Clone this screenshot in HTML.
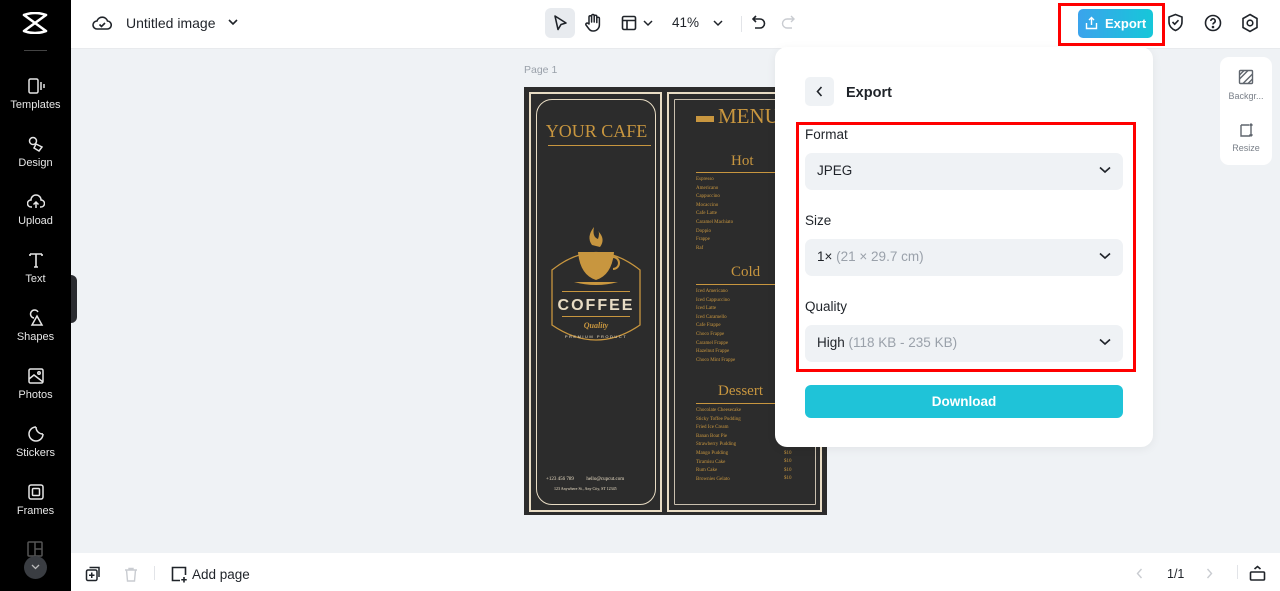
<!DOCTYPE html>
<html><head><meta charset="utf-8">
<style>
*{box-sizing:border-box;margin:0;padding:0}
body{width:1280px;height:591px;overflow:hidden;font-family:"Liberation Sans",sans-serif;background:#eff2f5;position:relative;color:#1f2329}
.abs{position:absolute}
#side{left:0;top:0;width:71px;height:591px;background:#000}
.si{position:absolute;left:0;width:71px;text-align:center;color:#e6e6e6;font-size:11px}
.si svg{display:block;margin:0 auto 3px}
#top{left:71px;top:0;width:1209px;height:48px;background:#fff}
#bot{left:71px;top:553px;width:1209px;height:38px;background:#fff}
.menu{font-family:"Liberation Serif",serif;color:#c8963f}
.item{font-size:5px;line-height:8.6px;color:#c8963f;font-family:"Liberation Serif",serif}
#panel{left:775px;top:47px;width:378px;height:400px;background:#fff;border-radius:12px;box-shadow:0 2px 10px rgba(0,0,0,.06)}
.lbl{position:absolute;left:30px;font-size:13.5px;color:#1f2329}
.sel{position:absolute;left:30px;width:318px;height:37px;background:#eff2f5;border-radius:7px;font-size:13.5px;padding:10px 12px;color:#1f2329}
.sel .g{color:#9aa1aa}
.sel svg{position:absolute;right:12px;top:13px}
</style></head><body>

<div id="side" class="abs">
  <svg class="abs" style="left:22px;top:12px" width="26" height="22" viewBox="0 0 26 22"><path d="M2 3 Q13 -1 24 3 L2 19 Q13 23 24 19 Z" fill="none" stroke="#fff" stroke-width="2.6" stroke-linejoin="round"/></svg>
  <div class="abs" style="left:24px;top:50px;width:23px;height:1px;background:#444"></div>
  <div class="si" style="top:76px"><svg width="18" height="20" viewBox="0 0 18 18" fill="none" stroke="#e6e6e6" stroke-width="1.5"><rect x="2" y="2" width="9" height="14" rx="1.5"/><path d="M14 5v8M17 7v4"/></svg>Templates</div>
  <div class="si" style="top:134px"><svg width="18" height="20" viewBox="0 0 18 18" fill="none" stroke="#e6e6e6" stroke-width="1.5"><circle cx="6" cy="6" r="3.5"/><path d="M9 9l6 3-3 4-5-3z"/></svg>Design</div>
  <div class="si" style="top:192px"><svg width="18" height="20" viewBox="0 0 18 18" fill="none" stroke="#e6e6e6" stroke-width="1.5"><path d="M5 14H4a3.5 3.5 0 0 1 0-7 5 5 0 0 1 10 0 3.5 3.5 0 0 1 0 7h-1M9 15V9M6.5 11.5L9 9l2.5 2.5"/></svg>Upload</div>
  <div class="si" style="top:250px"><svg width="18" height="20" viewBox="0 0 18 18" fill="none" stroke="#e6e6e6" stroke-width="1.6"><path d="M3 3h12M9 3v13M3 3v2M15 3v2M7 16h4"/></svg>Text</div>
  <div class="si" style="top:308px"><svg width="18" height="20" viewBox="0 0 18 18" fill="none" stroke="#e6e6e6" stroke-width="1.5"><path d="M7 9a4 4 0 1 1 4-6M10 7l5 9H5z"/></svg>Shapes</div>
  <div class="si" style="top:366px"><svg width="18" height="20" viewBox="0 0 18 18" fill="none" stroke="#e6e6e6" stroke-width="1.5"><rect x="2" y="2" width="14" height="14" rx="1.5"/><path d="M2 12l5-4 9 7"/><circle cx="12" cy="6" r="1.2"/></svg>Photos</div>
  <div class="si" style="top:424px"><svg width="18" height="20" viewBox="0 0 18 18" fill="none" stroke="#e6e6e6" stroke-width="1.5"><path d="M16 9A7 7 0 1 1 9 2"/><path d="M9 2c0 4 3 7 7 7"/></svg>Stickers</div>
  <div class="si" style="top:482px"><svg width="18" height="20" viewBox="0 0 18 18" fill="none" stroke="#e6e6e6" stroke-width="1.5"><rect x="2" y="2" width="14" height="14" rx="2"/><rect x="5.5" y="5.5" width="7" height="7" rx="1"/></svg>Frames</div>
  <svg class="abs" style="left:27px;top:541px" width="16" height="16" viewBox="0 0 16 16" fill="none" stroke="#555" stroke-width="1.5"><rect x="1" y="1" width="14" height="14" rx="1"/><path d="M8 1v14M8 8h7"/></svg>
  <div class="abs" style="left:24px;top:556px;width:23px;height:23px;border-radius:50%;background:#3a3d42"></div>
  <svg class="abs" style="left:31px;top:564px" width="9" height="6" viewBox="0 0 9 6"><path d="M1 1l3.5 3.5L8 1" fill="none" stroke="#bbb" stroke-width="1.3"/></svg>
</div>
<div class="abs" style="left:71px;top:275px;width:6px;height:48px;background:#2a2c30;border-radius:0 6px 6px 0"></div>

<div id="top" class="abs">
  <svg class="abs" style="left:21px;top:14px" width="20" height="18" viewBox="0 0 20 18" fill="none" stroke="#1f2329" stroke-width="1.6"><path d="M6 15H5a4 4 0 0 1 0-8 5.5 5.5 0 0 1 10.5 0A4 4 0 0 1 15 15z"/><path d="M7.5 10.5l2 2 3.5-3.5"/></svg>
  <div class="abs" style="left:55px;top:15px;font-size:14px;color:#1f2329">Untitled image</div>
  <svg class="abs" style="left:157px;top:19px" width="10" height="7" viewBox="0 0 10 7"><path d="M1 1l4 4 4-4" fill="none" stroke="#1f2329" stroke-width="1.6"/></svg>
  <div class="abs" style="left:474px;top:8px;width:30px;height:30px;background:#e8ebef;border-radius:6px"></div>
  <svg class="abs" style="left:481px;top:14px" width="16" height="18" viewBox="0 0 16 18"><path d="M3 2l11 7-5 1.5-3 5z" fill="none" stroke="#1f2329" stroke-width="1.6" stroke-linejoin="round"/></svg>
  <svg class="abs" style="left:513px;top:13px" width="18" height="20" viewBox="0 0 18 20" fill="none" stroke="#1f2329" stroke-width="1.5" stroke-linejoin="round"><path d="M5 11V4a1.3 1.3 0 0 1 2.6 0v5V2.8a1.3 1.3 0 0 1 2.6 0V9V3.5a1.3 1.3 0 0 1 2.6 0V9.5V5.5a1.3 1.3 0 0 1 2.6 0V12a6 6 0 0 1-6 6H9a5 5 0 0 1-4-2L2 12a1.3 1.3 0 0 1 2-1.6z"/></svg>
  <svg class="abs" style="left:550px;top:15px" width="16" height="16" viewBox="0 0 16 16" fill="none" stroke="#1f2329" stroke-width="1.6"><rect x="1.5" y="1.5" width="13" height="13" rx="1.5"/><path d="M1.5 5.5h13M6 5.5v9"/></svg>
  <svg class="abs" style="left:572px;top:20px" width="10" height="7" viewBox="0 0 10 7"><path d="M1 1l4 4 4-4" fill="none" stroke="#1f2329" stroke-width="1.5"/></svg>
  <div class="abs" style="left:601px;top:15px;font-size:13.5px">41%</div>
  <svg class="abs" style="left:642px;top:20px" width="10" height="7" viewBox="0 0 10 7"><path d="M1 1l4 4 4-4" fill="none" stroke="#1f2329" stroke-width="1.5"/></svg>
  <div class="abs" style="left:670px;top:16px;width:1px;height:16px;background:#e2e4e8"></div>
  <svg class="abs" style="left:681px;top:15px" width="14" height="15" viewBox="0 0 14 15" fill="none" stroke="#1f2329" stroke-width="1.6"><path d="M4 1L1 4l3 3M1 4h7a4.5 4.5 0 0 1 0 9H3"/></svg>
  <svg class="abs" style="left:710px;top:15px" width="14" height="15" viewBox="0 0 14 15" fill="none" stroke="#c9ccd1" stroke-width="1.4"><path d="M10 1l3 3-3 3M13 4H6a4.5 4.5 0 0 0 0 9h5"/></svg>
  <div class="abs" style="left:987px;top:3px;width:107px;height:43px;border:3px solid #ff0000"></div>
  <div class="abs" style="left:1007px;top:9px;width:75px;height:29px;border-radius:5px;background:linear-gradient(90deg,#3ba3ec,#16c7d9);color:#fff;font-weight:bold;font-size:13px;padding:7px 0 0 27px;white-space:nowrap;overflow:hidden">Export</div>
  <svg class="abs" style="left:1014px;top:16px" width="13" height="14" viewBox="0 0 13 14" fill="none" stroke="#fff" stroke-width="1.4"><path d="M6.5 9V1.5M4 4l2.5-2.5L9 4M1.5 7v5.5h10V7"/></svg>
  <svg class="abs" style="left:1096px;top:13px" width="17" height="19" viewBox="0 0 17 19" fill="none" stroke="#1f2329" stroke-width="1.6"><path d="M8.5 1.5l6.5 2.5v5c0 4-3 7-6.5 8.5C5 16 2 13 2 9V4z"/><path d="M5.5 9l2.2 2.2 3.8-4"/></svg>
  <svg class="abs" style="left:1133px;top:14px" width="18" height="18" viewBox="0 0 18 18" fill="none" stroke="#1f2329" stroke-width="1.6"><circle cx="9" cy="9" r="7.5"/><path d="M6.8 7a2.2 2.2 0 1 1 3 2c-.6.3-.8.8-.8 1.5"/><circle cx="9" cy="13" r=".5" fill="#1f2329"/></svg>
  <svg class="abs" style="left:1170px;top:13px" width="18" height="20" viewBox="0 0 18 20" fill="none" stroke="#1f2329" stroke-width="1.6"><path d="M9 1.5l7 4v9l-7 4-7-4v-9z"/><circle cx="9" cy="10" r="2.8"/></svg>
</div>
<div class="abs" style="left:71px;top:48px;width:1209px;height:1px;background:#e8eaed"></div>

<div class="abs" style="left:524px;top:64px;font-size:10.5px;color:#9aa1aa">Page 1</div>

<div class="abs" style="left:524px;top:87px;width:303px;height:428px;background:#2c2c2c">
  <div class="abs" style="left:5px;top:5px;width:133px;height:420px;border:2px solid #e8dcc4"></div>
  <div class="abs" style="left:12px;top:12px;width:120px;height:406px;border:1.5px solid #e8dcc4;border-radius:16px"></div>
  <div class="abs menu" style="left:13px;top:34px;width:119px;text-align:center;font-size:18px">YOUR CAFE</div>
  <div class="abs" style="left:24px;top:58px;width:103px;height:1px;background:#c8963f"></div>
  <svg class="abs" style="left:26px;top:138px" width="92" height="130" viewBox="0 0 92 130">
    <path d="M2 45 Q46 10 90 45 V100 Q46 130 2 100 Z" fill="none" stroke="#c8963f" stroke-width="1.3"/>
    <path d="M42 20 Q36 12 44 2 Q42 12 48 14 Q50 8 48 6 Q56 14 50 22 Z" fill="#c8963f"/>
    <path d="M28 27 H64 Q62 50 46 55 Q30 50 28 27 Z" fill="#c8963f"/>
    <path d="M63 32 a6 6 0 0 1 0 12" fill="none" stroke="#c8963f" stroke-width="2"/>
    <path d="M24 57 H68 Q46 63 24 57 Z" fill="#c8963f"/>
    <rect x="12" y="66" width="68" height="1" fill="#c8963f"/>
    <text x="46" y="85" text-anchor="middle" font-family="Liberation Sans" font-weight="bold" font-size="16" letter-spacing="2" fill="#e8dcc4">COFFEE</text>
    <rect x="12" y="91" width="68" height="1" fill="#c8963f"/>
    <text x="46" y="103" text-anchor="middle" font-family="Liberation Serif" font-style="italic" font-weight="bold" font-size="8" fill="#c8963f">Quality</text>
    <text x="46" y="113" text-anchor="middle" font-family="Liberation Sans" font-size="4" letter-spacing="1.5" fill="#e8dcc4">PREMIUM PRODUCT</text>
  </svg>
  <div class="abs item" style="left:22px;top:389px;color:#e8dcc4">+123 456 789 &nbsp;&nbsp;&nbsp;&nbsp;&nbsp;&nbsp;&nbsp;&nbsp; hello@cupcut.com</div>
  <div class="abs item" style="left:30px;top:398px;font-size:4px;color:#e8dcc4">123 Anywhere St., Any City, ST 12345</div>

  <div class="abs" style="left:143px;top:5px;width:155px;height:420px;border:2px solid #e8dcc4"></div>
  <div class="abs" style="left:150px;top:12px;width:142px;height:406px;border:1px solid #c9bfae;border-radius:1px"></div>
  <div class="abs" style="left:172px;top:29px;width:18px;height:6px;background:#c8963f"></div>
  <div class="abs menu" style="left:194px;top:17px;font-size:21px">MENU</div>
  <div class="abs menu" style="left:207px;top:66px;font-size:15px">Hot</div>
  <div class="abs" style="left:172px;top:85px;width:110px;height:1px;background:#c8963f"></div>
  <div class="abs item" style="left:172px;top:89px">Espresso<br>Americano<br>Cappuccino<br>Mocaccino<br>Cafe Latte<br>Caramel Machiato<br>Doppio<br>Frappe<br>Raf</div>
  <div class="abs menu" style="left:207px;top:177px;font-size:15px">Cold</div>
  <div class="abs" style="left:172px;top:197px;width:110px;height:1px;background:#c8963f"></div>
  <div class="abs item" style="left:172px;top:201px">Iced Americano<br>Iced Cappuccino<br>Iced Latte<br>Iced Caramello<br>Cafe Frappe<br>Choco Frappe<br>Caramel Frappe<br>Hazelnut Frappe<br>Choco Mint Frappe</div>
  <div class="abs menu" style="left:194px;top:296px;font-size:15px">Dessert</div>
  <div class="abs" style="left:172px;top:316px;width:110px;height:1px;background:#c8963f"></div>
  <div class="abs item" style="left:172px;top:320px">Chocolate Cheesecake<br>Sticky Toffee Pudding<br>Fried Ice Cream<br>Banan Boat Pie<br>Strawberry Pudding<br>Mango Pudding<br>Tiramisu Cake<br>Rum Cake<br>Brownies Gelato</div>
  <div class="abs item" style="left:260px;top:354px">$10<br>$10<br>$10<br>$10<br>$10</div>
</div>

<div id="panel" class="abs">
  <div class="abs" style="left:30px;top:30px;width:29px;height:29px;background:#eff2f5;border-radius:5px"></div>
  <svg class="abs" style="left:41px;top:39px" width="7" height="11" viewBox="0 0 7 11"><path d="M5.5 1L1.5 5.5 5.5 10" fill="none" stroke="#1f2329" stroke-width="1.6"/></svg>
  <div class="abs" style="left:71px;top:38px;font-size:14.5px;font-weight:bold">Export</div>
  <div class="abs" style="left:21px;top:75px;width:340px;height:250px;border:3px solid #ff0000"></div>
  <div class="lbl" style="top:80px">Format</div>
  <div class="sel" style="top:106px">JPEG<svg width="12" height="8" viewBox="0 0 12 8"><path d="M1 1.5l5 4.5 5-4.5" fill="none" stroke="#1f2329" stroke-width="1.6"/></svg></div>
  <div class="lbl" style="top:166px">Size</div>
  <div class="sel" style="top:192px">1× <span class="g">(21 × 29.7 cm)</span><svg width="12" height="8" viewBox="0 0 12 8"><path d="M1 1.5l5 4.5 5-4.5" fill="none" stroke="#1f2329" stroke-width="1.6"/></svg></div>
  <div class="lbl" style="top:252px">Quality</div>
  <div class="sel" style="top:278px">High <span class="g">(118 KB - 235 KB)</span><svg width="12" height="8" viewBox="0 0 12 8"><path d="M1 1.5l5 4.5 5-4.5" fill="none" stroke="#1f2329" stroke-width="1.6"/></svg></div>
  <div class="abs" style="left:30px;top:338px;width:318px;height:33px;background:#1fc3d8;border-radius:6px;color:#fff;font-weight:bold;font-size:13.5px;text-align:center;line-height:33px">Download</div>
</div>

<div class="abs" style="left:1220px;top:57px;width:52px;height:108px;background:#fff;border-radius:9px"></div>
<svg class="abs" style="left:1238px;top:69px" width="16" height="16" viewBox="0 0 16 16" fill="none" stroke="#5f656d" stroke-width="1.4"><rect x="1.5" y="1.5" width="13" height="13" rx="1"/><path d="M1.5 10l8.5-8.5M5 14.5l9.5-9.5M1.5 6L6 1.5M10 14.5l4.5-4.5"/></svg>
<div class="abs" style="left:1222px;top:91px;width:48px;text-align:center;font-size:9px;color:#7a8089">Backgr...</div>
<svg class="abs" style="left:1238px;top:122px" width="16" height="16" viewBox="0 0 16 16" fill="none" stroke="#5f656d" stroke-width="1.4"><path d="M3 3h8M3 3v11h9M13 2v12M11.5 3.5L13 2l1.5 1.5M11.5 12.5L13 14l1.5-1.5"/></svg>
<div class="abs" style="left:1222px;top:143px;width:48px;text-align:center;font-size:9px;color:#7a8089">Resize</div>

<div id="bot" class="abs">
  <svg class="abs" style="left:14px;top:13px" width="16" height="16" viewBox="0 0 16 16" fill="none" stroke="#1f2329" stroke-width="1.5"><rect x="1.5" y="4" width="10.5" height="10.5" rx="1.5"/><path d="M4.5 1.5h9.5V11M6.75 6.5v5.5M4 9.25h5.5"/></svg>
  <svg class="abs" style="left:53px;top:14px" width="14" height="15" viewBox="0 0 14 15" fill="none" stroke="#c9ccd1" stroke-width="1.4"><path d="M1 3h12M5 3V1.5h4V3M2.5 3l1 11h7l1-11"/></svg>
  <div class="abs" style="left:83px;top:13px;width:1px;height:14px;background:#e2e4e8"></div>
  <svg class="abs" style="left:100px;top:13px" width="17" height="17" viewBox="0 0 17 17" fill="none" stroke="#1f2329" stroke-width="1.6"><path d="M9 14.5H1.5v-13h13V9M13 11v5.5M10.25 13.75h5.5"/></svg>
  <div class="abs" style="left:121px;top:14px;font-size:13.5px">Add page</div>
  <svg class="abs" style="left:1065px;top:15px" width="7" height="11" viewBox="0 0 7 11"><path d="M5.5 1L1.5 5.5 5.5 10" fill="none" stroke="#c9ccd1" stroke-width="1.4"/></svg>
  <div class="abs" style="left:1096px;top:14px;font-size:12.5px">1/1</div>
  <svg class="abs" style="left:1135px;top:15px" width="7" height="11" viewBox="0 0 7 11"><path d="M1.5 1l4 4.5-4 4.5" fill="none" stroke="#c9ccd1" stroke-width="1.4"/></svg>
  <div class="abs" style="left:1166px;top:12px;width:1px;height:14px;background:#e2e4e8"></div>
  <svg class="abs" style="left:1178px;top:12px" width="17" height="16" viewBox="0 0 17 16" fill="none" stroke="#1f2329" stroke-width="1.6"><rect x="1.5" y="7" width="14" height="8" rx="1"/><path d="M5.5 4l3-2.5 3 2.5"/></svg>
</div>
</body></html>
